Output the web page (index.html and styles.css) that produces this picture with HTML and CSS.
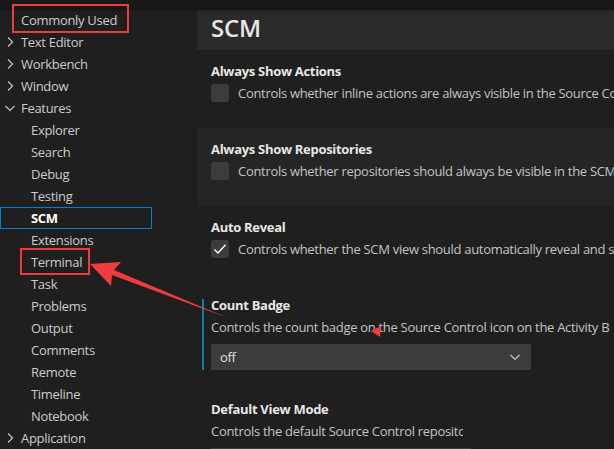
FILE: index.html
```html
<!DOCTYPE html>
<html>
<head>
<meta charset="utf-8">
<link rel="stylesheet" href="styles.css">
</head>
<body>
<div class="app">
  <div class="topbar"></div>
  <div class="main">
    <nav class="sidebar">
      <div class="row lvl0 nochev"><span>Commonly Used</span></div>
      <div class="row lvl0"><svg class="chev" viewBox="0 0 16 16"><path d="M6 3.5l4.5 4.5L6 12.5"/></svg><span>Text Editor</span></div>
      <div class="row lvl0"><svg class="chev" viewBox="0 0 16 16"><path d="M6 3.5l4.5 4.5L6 12.5"/></svg><span>Workbench</span></div>
      <div class="row lvl0"><svg class="chev" viewBox="0 0 16 16"><path d="M6 3.5l4.5 4.5L6 12.5"/></svg><span>Window</span></div>
      <div class="row lvl0"><svg class="chev" viewBox="0 0 16 16"><path d="M3.5 6l4.5 4.5L12.5 6"/></svg><span>Features</span></div>
      <div class="row lvl1"><span>Explorer</span></div>
      <div class="row lvl1"><span>Search</span></div>
      <div class="row lvl1"><span>Debug</span></div>
      <div class="row lvl1"><span>Testing</span></div>
      <div class="row lvl1 selected"><span>SCM</span></div>
      <div class="row lvl1"><span>Extensions</span></div>
      <div class="row lvl1"><span>Terminal</span></div>
      <div class="row lvl1"><span>Task</span></div>
      <div class="row lvl1"><span>Problems</span></div>
      <div class="row lvl1"><span>Output</span></div>
      <div class="row lvl1"><span>Comments</span></div>
      <div class="row lvl1"><span>Remote</span></div>
      <div class="row lvl1"><span>Timeline</span></div>
      <div class="row lvl1"><span>Notebook</span></div>
      <div class="row lvl0"><svg class="chev" viewBox="0 0 16 16"><path d="M6 3.5l4.5 4.5L6 12.5"/></svg><span>Application</span></div>
    </nav>
    <section class="content">
      <div class="header"><h1>SCM</h1></div>
      <div class="setting">
        <div class="title">Always Show Actions</div>
        <div class="check-row"><span class="checkbox"></span><span class="desc">Controls whether inline actions are always visible in the Source Co</span></div>
      </div>
      <div class="setting hover">
        <div class="title">Always Show Repositories</div>
        <div class="check-row"><span class="checkbox"></span><span class="desc">Controls whether repositories should always be visible in the SCM</span></div>
      </div>
      <div class="setting">
        <div class="title">Auto Reveal</div>
        <div class="check-row"><span class="checkbox"><svg viewBox="0 0 16 16"><path d="M2.5 8.5l3.5 3.5L13.5 3.8"/></svg></span><span class="desc">Controls whether the SCM view should automatically reveal and se</span></div>
      </div>
      <div class="setting focused tall">
        <div class="title">Count Badge</div>
        <div class="desc">Controls the count badge on the Source Control icon on the Activity B</div>
        <div class="select"><span>off</span><svg viewBox="0 0 16 16"><path d="M3.5 6l4.5 4.5L12.5 6"/></svg></div>
      </div>
      <div class="setting">
        <div class="title">Default View Mode</div>
        <div class="desc narrow">Controls the default Source Control repository view mode.</div>
        <div class="select short"></div>
      </div>
    </section>
  </div>
  <div class="mark mark-common"></div>
  <div class="mark mark-terminal"></div>
  <svg class="annot" width="614" height="449" viewBox="0 0 614 449">
    <polygon points="90,264 121,262 114,270 228,318 112,275 111,286" fill="#f03c3c"/>
    <polygon points="371,331 381,326 380,337" fill="#f03c3c"/>
  </svg>
</div>
</body>
</html>
```
FILE: styles.css
```css
* { box-sizing: border-box; }
html, body { margin: 0; padding: 0; }
body {
  background: #1f1f1f;
  font-family: "Open Sans", "Noto Sans", sans-serif;
  font-size: 13px;
  letter-spacing: -0.3px;
  color: #cccccc;
  width: 614px;
  height: 449px;
  overflow: hidden;
}
.app { position: relative; width: 614px; height: 449px; overflow: hidden; }
.topbar {
  height: 8px;
  background: #181818;
  box-shadow: 0 1px 4px rgba(0,0,0,0.6);
  position: relative;
  z-index: 1;
}
.main { display: flex; }
.sidebar { width: 197px; flex: none; padding-top: 1px; }
.row {
  height: 22px;
  display: flex;
  align-items: center;
  white-space: nowrap;
  width: 152px;
  border: 1px solid transparent;
}
.row.lvl0 { padding-left: 1px; }
.row.lvl0.nochev { padding-left: 20px; }
.row.lvl1 { padding-left: 30px; }
.chev {
  width: 16px; height: 16px; flex: none; margin-right: 3px;
  fill: none; stroke: #c5c5c5; stroke-width: 1.2;
}
.row.selected { border-color: #007fd4; }
.row.selected span { font-weight: 700; color: #ffffff; }
.content { flex: 1; min-width: 0; padding-top: 2px; white-space: nowrap; overflow: hidden; }
.header { height: 40px; background: #2a2a2a; padding-left: 14px; }
.header h1 {
  margin: 0; font-size: 24px; font-weight: 600; color: #e7e7e7;
  line-height: 36px; letter-spacing: -0.2px;
}
.setting { height: 78px; padding: 12px 14px 0 14px; position: relative; }
.setting.tall { height: 104px; }
.setting.hover { background: #252525; }
.setting.focused::before {
  content: ""; position: absolute; left: 5px; top: 15px; width: 2px; height: 71px; background: #0f7fab;
}
.title { font-weight: 700; color: #e7e7e7; line-height: 18px; font-size: 13px; }
.check-row { display: flex; align-items: center; margin-top: 4px; gap: 9px; }
.checkbox {
  width: 18px; height: 18px; flex: none; border-radius: 3px; background: #3c3c3c;
  display: flex; align-items: center; justify-content: center;
}
.checkbox svg { width: 16px; height: 16px; fill: none; stroke: #ffffff; stroke-width: 1.4; }
.desc { color: #c4c4c4; line-height: 18px; }
.setting .desc { display: block; }
.setting .check-row .desc { display: inline; }
.setting.tall .desc, .setting > .desc { margin-top: 4px; }
.desc.narrow { width: 252px; overflow: hidden; }
.select {
  margin-top: 8px; width: 320px; height: 26px; background: #3c3c3c;
  display: flex; align-items: center; justify-content: space-between; padding: 0 8px 0 9px;
  color: #e0e0e0;
}
.select svg { width: 16px; height: 16px; fill: none; stroke: #c5c5c5; stroke-width: 1.2; }
.select.short { width: 260px; }
.mark { position: absolute; border: 2.5px solid #ee3b3b; }
.mark-common { left: 12px; top: 4px; width: 117px; height: 29px; z-index: 2; }
.mark-terminal { left: 20px; top: 248px; width: 70px; height: 27px; }
.annot { position: absolute; left: 0; top: 0; pointer-events: none; }
```
